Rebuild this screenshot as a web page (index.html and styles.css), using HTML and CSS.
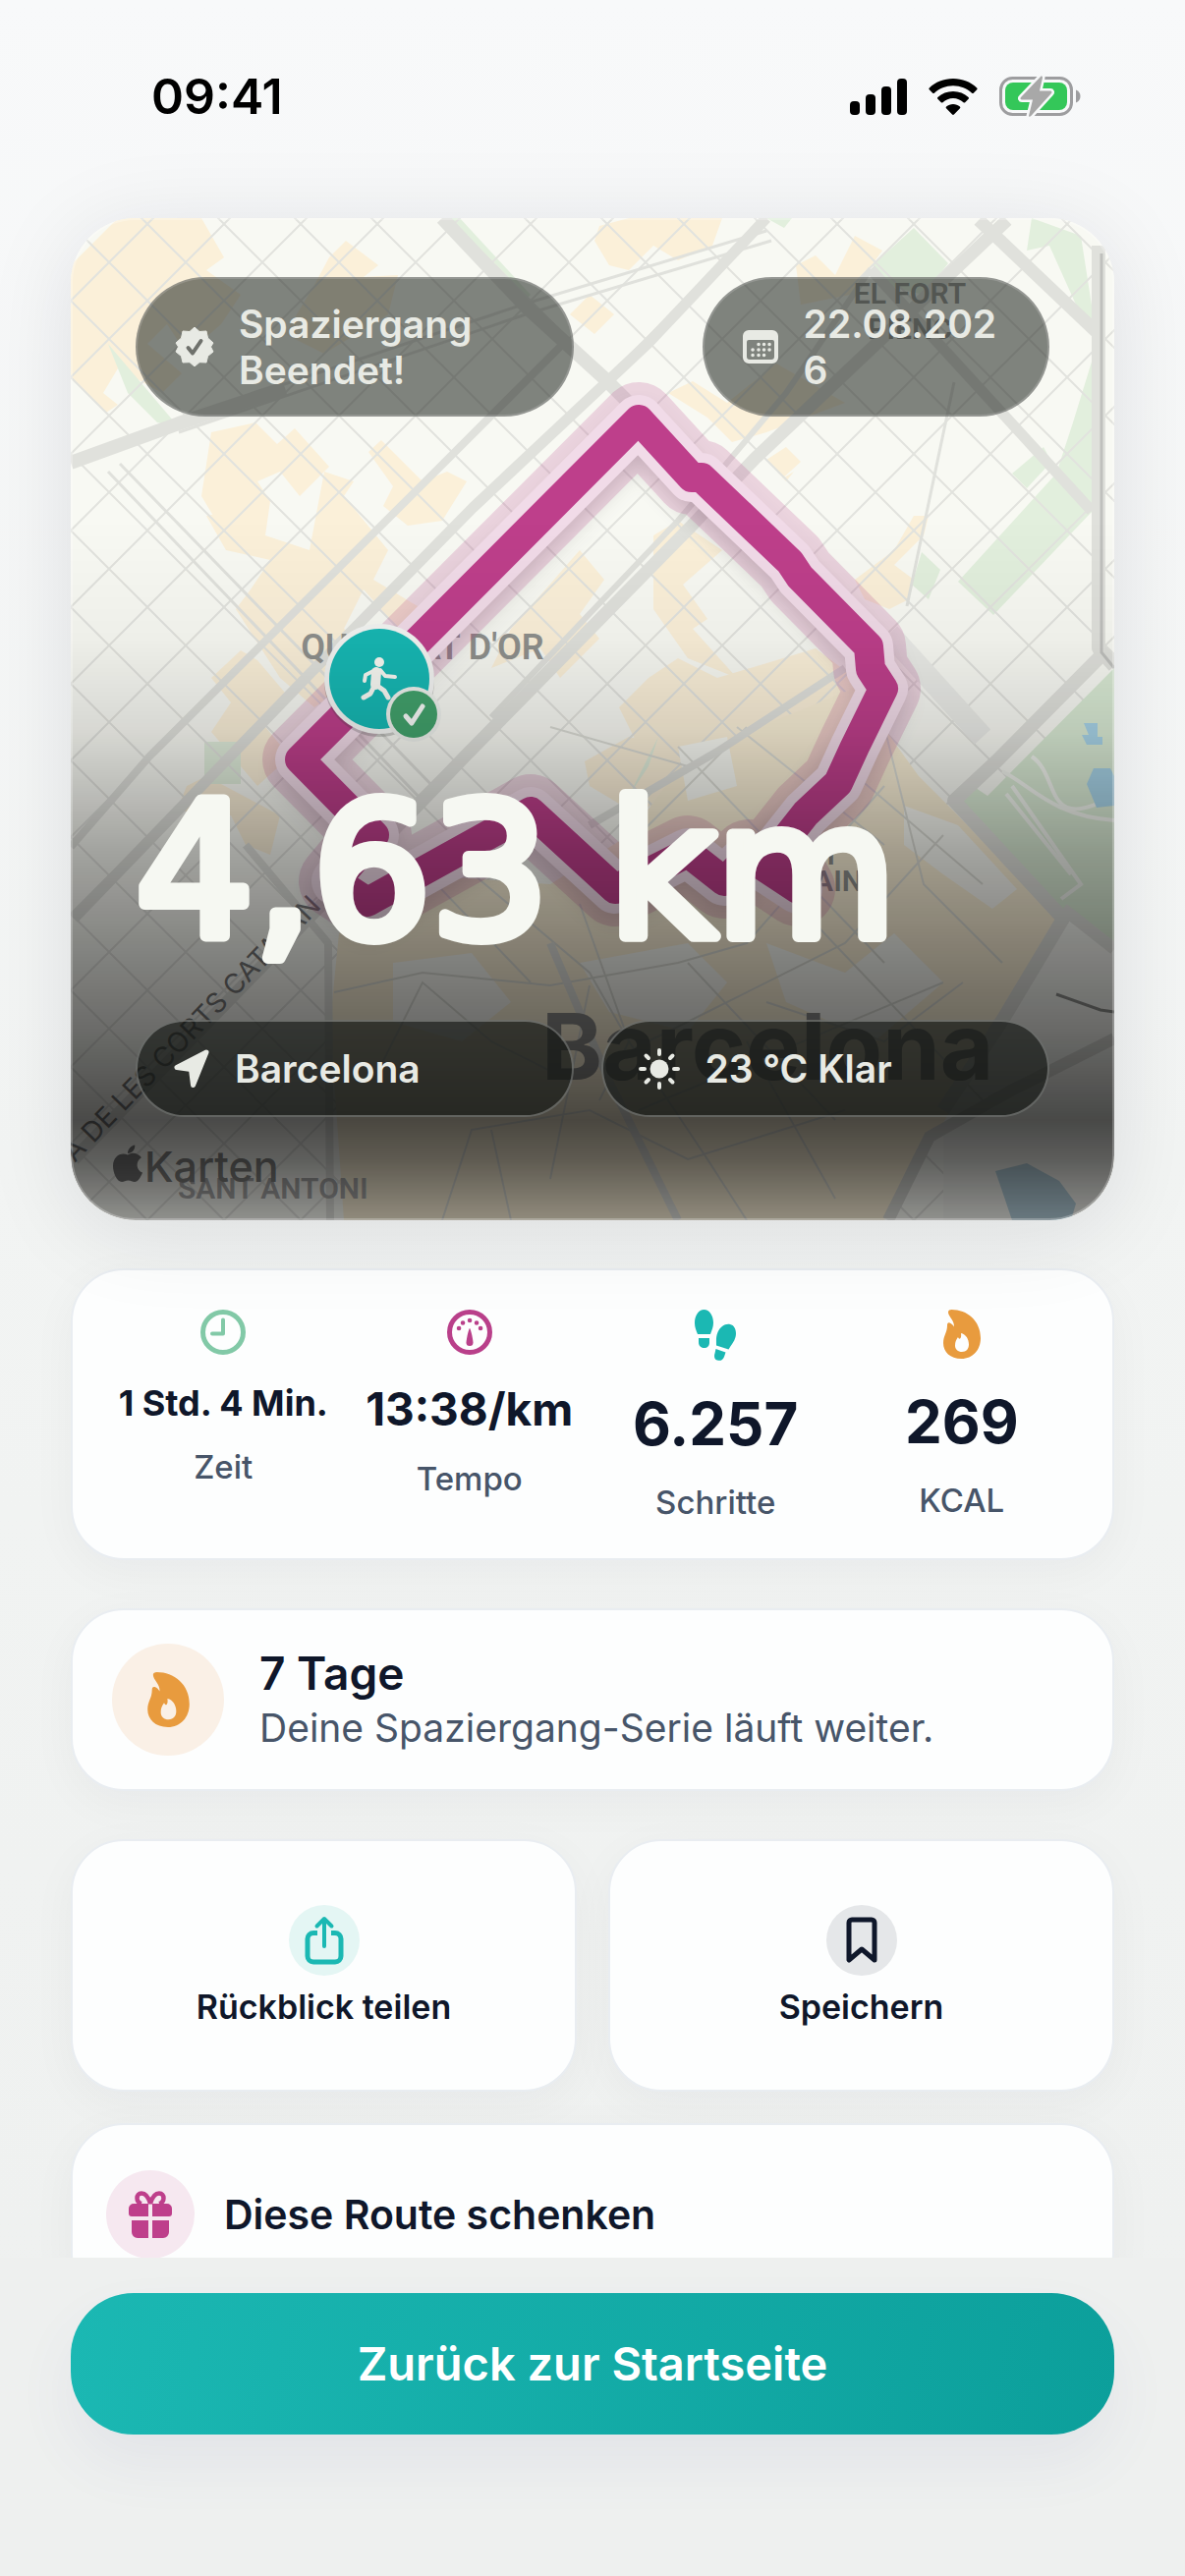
FILE: index.html
```html
<!DOCTYPE html>
<html lang="de">
<head>
    <meta charset="UTF-8">
    <meta name="viewport" content="width=device-width, initial-scale=1.0">
    <title>Spaziergang Beendet</title>
    <link rel="stylesheet" href="styles.css">
</head>
<body>
    <header class="status-bar">
        <span class="clock">09:41</span>
        <div class="status-icons">
            <svg width="58" height="38" viewBox="0 0 58 38">
                <rect x="0" y="24" width="10" height="14" rx="4"/>
                <rect x="16" y="17" width="10" height="21" rx="4"/>
                <rect x="32" y="9" width="10" height="29" rx="4"/>
                <rect x="48" y="1" width="10" height="37" rx="4"/>
            </svg>
            <svg width="50" height="38" viewBox="0 0 50 38">
                <path d="M25 1C15.500 1 7 4.500.8 10.500c-.6.6-.6 1.200 0 1.800l3.400 3.400c.5.500 1.200.5 1.700 0C11 11 17.500 8.200 25 8.200s14 2.800 19.100 7.500c.5.500 1.200.5 1.700 0l3.400-3.400c.6-.6.6-1.200 0-1.800C43 4.500 34.500 1 25 1z"/>
                <path d="M25 14c-6 0-11.500 2.200-15.600 6-.6.6-.6 1.200 0 1.800l3.400 3.400c.5.500 1.200.5 1.700 0C17.300 22.700 21 21 25 21s7.700 1.700 10.500 4.200c.5.500 1.200.5 1.700 0l3.400-3.400c.6-.6.6-1.200 0-1.800C36.500 16.200 31 14 25 14z"/>
                <path d="M25 27c-2.600 0-5 .9-6.900 2.500-.6.5-.6 1.200-.1 1.700l6.100 6.300c.5.500 1.300.5 1.800 0l6.100-6.300c.5-.5.5-1.200-.1-1.700C30 27.900 27.600 27 25 27z"/>
            </svg>
            <svg width="83" height="42" viewBox="0 0 83 42">
                <rect x="1.500" y="2.500" width="72" height="37" rx="12" fill="none" stroke="#9d9d9f" stroke-width="3"/>
                <path d="M78 14.500c2.800 1 4.500 3.500 4.500 6.500s-1.700 5.500-4.500 6.500z" fill="#9d9d9f"/>
                <rect x="6" y="7" width="63" height="28" rx="8" fill="#34c759"/>
                <path d="M42 1L22 22c-1 1-.5 2.500 1 2.500h11L30 41c0 1 1 1 2 .3L53 18c1-1 .5-2.500-1-2.500H41L44 2c.2-1-1-2-2-1z" fill="#a8a8a8" stroke="#f8f9fa" stroke-width="5" paint-order="stroke"/>
            </svg>
        </div>
    </header>

    <main class="content">
        <section class="hero">
            <svg class="map" viewBox="72 222 1062 1020" preserveAspectRatio="xMidYMid slice">
                <defs>
                    <pattern id="blocks" x="72" y="540" width="78" height="78" patternUnits="userSpaceOnUse">
                        <path d="M0 0L78 78M78 0L0 78" stroke="#e2e3de" stroke-width="2" fill="none"/>
                    </pattern>
                    <filter id="soft" x="-20%" y="-20%" width="140%" height="140%">
                        <feGaussianBlur stdDeviation="12"/>
                    </filter>
                </defs>
                <rect x="72" y="222" width="1062" height="1020" fill="#f8f9f3"/>

                <!-- built-up areas -->
                <g fill="#fbf0d9">
                    <path d="M72 270L120 222H205L228 262L210 275L245 300L225 330L190 360L170 330L150 350L185 380L165 400L120 375L105 400L120 412L108 420L72 385z"/>
                    <path d="M320 290L335 262L352 245L385 270L370 282L405 280L395 320L330 360L290 340z"/>
                    <path d="M215 440L260 430L282 452L300 436L335 475L305 505L285 480L262 490L275 510L270 545L220 530L205 505z"/>
                    <path d="M375 460L388 448L430 490L455 480L475 490L450 530L415 535L390 515L400 495z"/>
                    <path d="M210 525L235 520L270 545L315 560L330 480L360 490L350 505L395 560L380 590L430 620L405 640L370 600L350 640L395 665L320 720L285 690L240 620L255 600L275 570L230 560z"/>
                    <path d="M215 690L245 662L262 672L290 705L270 740L295 770L262 800L215 745L235 715z"/>
                    <path d="M520 640L590 560L615 590L590 625L610 650L570 690L550 660L500 680z"/>
                    <path d="M610 230L640 222H735L725 250L690 265L665 250L640 275L620 270L605 245z"/>
                    <path d="M810 270L830 260L850 280L870 240L898 255L865 300L815 310z"/>
                    <path d="M680 400L705 388L740 410L790 370L860 410L780 440L745 450L720 425z"/>
                    <path d="M780 468L800 455L815 470L795 488L808 480L800 490z"/>
                    <path d="M665 545L690 530L735 560L695 595L720 630L705 640L750 690L700 670L665 620z"/>
                    <path d="M870 590L910 560L930 525L945 525L940 545L910 575L930 590L925 610L905 620L880 610z"/>
                    <path d="M660 690L690 670L730 690L830 660L870 690L900 740L880 790L770 800L650 760L630 720z"/>
                    <path d="M595 775L640 750L690 760L695 790L650 830L600 800z"/>
                    <path d="M190 800L210 790L285 830L275 870L250 860L235 830L180 825z"/>
                    <path d="M580 320L600 300L625 320L605 340z"/>
                </g>
                <!-- parks -->
                <g fill="#e2efdd">
                    <path d="M888 270L930 232L965 268L940 300L900 290z"/>
                    <path d="M452 222H468L540 300L530 310z"/>
                    <path d="M1050 222L1100 240L1114 330L1095 310L1068 250L1045 255z"/>
                    <path d="M1112 365L1092 430L1075 482L975 592L1011 626L1112 520z"/>
                    <path d="M1030 482L1062 455L1070 470L1045 497z"/>
                    <path d="M938 562L957 580L945 610L928 595z"/>
                    <path d="M110 350L182 435L160 430L130 400z"/>
                    <path d="M780 222H806L798 232z"/>
                    <path d="M640 810L670 750L660 780z"/>
                    <path d="M208 755H245V798H208z"/>
                </g>

                <rect x="72" y="222" width="1062" height="1020" fill="url(#blocks)"/>
                <path d="M1134 680L1005 810L990 800L975 815L1085 930L1134 966z" fill="#d9ead4"/>
                <path d="M1134 966L1085 935L1021 1037L960 1140V1242H1134z" fill="#f3f4ef"/>

                <!-- old town -->
                <path d="M350 1242L336 1040L345 950L420 890L560 900L640 850L700 770L870 700L935 790L975 830L1080 940L1010 1060L900 1242z" fill="#f9efd6"/>
                <g fill="#f8f9f3">
                    <path d="M400 980L480 970L520 1020L470 1060L400 1040z"/>
                    <path d="M690 760L740 750L750 800L700 815z"/>
                    <path d="M780 960L860 990L910 950L960 1000L890 1060L800 1020z"/>
                    <path d="M590 980L700 960L740 1000L700 1050L620 1030z"/>
                    <path d="M920 820L975 840L1035 905L1010 925L960 890L920 860z"/>
                </g>
                <path d="M430 885L540 1000M470 880L600 990L640 1060L610 1120M340 1010L430 990L560 1003L690 980L760 960L900 800M380 1100L430 1000L500 1060L580 1100L700 1040L860 960L960 850M590 920L640 1060L720 1180L760 1242M700 980L850 1140M600 1003L560 1200M820 930L1000 1120M780 1020L900 1060L980 1000M650 1130L960 1000M450 1242L480 1150L600 1130L700 1180L860 1130M500 1150L520 1242M860 780L1000 900M900 740L940 900L1020 980M760 1060L850 1220M690 760L900 980M750 740L900 860M640 860L760 740M560 740L700 780" stroke="#dbdcd5" stroke-width="2" fill="none"/>
                <path d="M1134 1057L1029 1110L946 1157L904 1242" fill="none" stroke="#d8d9d4" stroke-width="12"/>
                <path d="M1013 1192L1045 1184L1078 1202L1095 1225L1090 1242H1030z" fill="#b4cfdb"/>

                <!-- main roads -->
                <g fill="none" stroke="#e0e1dc" stroke-linejoin="round">
                    <path d="M72 471L182 431L290 395" stroke-width="14"/>
                    <path d="M182 427L535 309L780 235M182 440L535 320L785 245" stroke-width="3"/>
                    <path d="M450 222L535 312L615 385L650 420" stroke-width="14"/>
                    <path d="M72 862L152 770L427 496L577 346" stroke-width="8"/>
                    <path d="M75 935L316 685L481 517L660 349L780 222" stroke-width="11"/>
                    <path d="M75 1180L270 980L430 815L473 770L704 535L768 467L1025 224" stroke-width="13"/>
                    <path d="M500 730L690 530L800 400L886 274" stroke-width="6"/>
                    <path d="M886 274L1111 520" stroke-width="11"/>
                    <path d="M996 224L1116 338" stroke-width="13"/>
                    <path d="M971 389L923 617" stroke-width="3"/>
                    <path d="M1118 250V660L1134 678" stroke-width="14"/>
                    <path d="M1120 668L1014 775L971 815L1082 935L1021 1037L960 1130" stroke-width="14"/>
                    <path d="M1082 925L1134 966" stroke-width="12"/>
                    <path d="M905 645L1000 750" stroke-width="22" stroke="#ebece8"/>
                    <path d="M600 840L730 765L860 680" stroke-width="8"/>
                    <path d="M560 960L620 1100L690 1242M336 1242L334 960L250 860" stroke-width="8"/>
                    <path d="M110 480L430 815M122 472L445 805" stroke-width="3"/>
                </g>
                <path d="M1121 258V664L1134 680" fill="none" stroke="#bfc0bd" stroke-width="3"/>
                <path d="M1075 1012L1120 1028L1134 1030" fill="none" stroke="#8e8f8c" stroke-width="3"/>
                <path d="M1020 785C1050 800 1070 830 1134 835M1050 770C1080 790 1060 850 1134 810M1030 800L1100 900L1080 915M1024 808L1090 890" fill="none" stroke="#f1f4ee" stroke-width="4"/>
                <path d="M1103 736H1117V750H1122V758H1106L1101 748H1108z" fill="#a8d4e8"/>
                <path d="M1113 782H1130L1134 790V820L1116 822L1106 798z" fill="#a8d4e8"/>

                <!-- place names -->
                <g class="place">
                    <text x="926" y="309" text-anchor="middle">EL FORT</text>
                    <text x="926" y="345" text-anchor="middle">PIENC</text>
                    <text x="430" y="671" text-anchor="middle" class="quarter">QUADRAT D'OR</text>
                    <text x="855" y="880" text-anchor="end">SANT</text>
                    <text x="878" y="907" text-anchor="end">AIN</text>
                    <text x="181" y="1220" class="faint">SANT ANTONI</text>
                </g>
                <text class="street" transform="translate(76 1184) rotate(-46)">A DE LES CORTS CATALAN</text>
                <text class="city" x="551" y="1099">Barcelona</text>

                <!-- walked route -->
                <g fill="none" stroke-linejoin="round" stroke-linecap="round">
                    <g stroke="#555" stroke-width="40" opacity=".3" filter="url(#soft)">
                        <path d="M305 782L650 440L709 500L814 595L884 668L899 711L870 770L820 838L762 882L737 906L700 878L626 914L540 836L374 930L341 904L381 858z"/>
                    </g>
                    <path class="route-glow" d="M650 427L305 773L381 850L342 897L374 918L540 826L626 905L700 868L737 897L762 872L812 905L790 866L820 828L853 797L870 760L899 701L886 681L884 658L814 587L804 572L714 486L704 486z"/>
                    <path class="route-casing" d="M650 427L305 773L381 850L342 897L374 918L540 826L626 905L700 868L737 897L762 872L812 905L790 866L820 828L853 797L870 760L899 701L886 681L884 658L814 587L804 572L714 486L704 486z"/>
                    <path class="route-line" d="M650 427L305 773L381 850L342 897L374 918L540 826L626 905L700 868L737 897L762 872L812 905L790 866L820 828L853 797L870 760L899 701L886 681L884 658L814 587L804 572L714 486L704 486z"/>
                </g>

                <!-- end marker -->
                <circle cx="386" cy="694" r="56" fill="#444" opacity=".25"/>
                <circle cx="386" cy="691" r="56" fill="#f4f5f3"/>
                <circle cx="386" cy="691" r="51" fill="#17b8b4"/>
                <g fill="none" stroke="#f8f9f3" stroke-linecap="round" stroke-linejoin="round">
                    <circle cx="386" cy="674" r="5" fill="#f8f9f3" stroke="none"/>
                    <path d="M383 684L382 697" stroke-width="10"/>
                    <path d="M380 683L372 687L371 693M387 682L392 688L402 689" stroke-width="4"/>
                    <path d="M384 698L391 703L395 710M380 700L377 706L370 710" stroke-width="5"/>
                </g>
                <circle cx="421" cy="727" r="28" fill="#eef1ed"/>
                <circle cx="421" cy="727" r="24" fill="#42a26c"/>
                <path d="M413 729L419 736L430 719" fill="none" stroke="#f6faf7" stroke-width="5" stroke-linecap="round" stroke-linejoin="round"/>

                <g transform="translate(115 1166)" fill="#777">
                    <path d="M15 9.500c3-1.800 7-2.300 10-.5 2 .9 3 2 3.800 3.200-6.200 4-5.300 13 1.200 15.300-1.600 4.400-4.600 9.500-8 9.500-2.500 0-3.700-1.500-6.500-1.500S11.300 37 9 37C4 37 0 27.500 0 21 0 11 8 6.500 15 9.500z"/>
                    <path d="M15 8c-.2-4 3.300-8 7.300-8.500C22.700 4 19.200 8 15 8z"/>
                </g>
                <text class="maps-brand" x="147" y="1203">Karten</text>
            </svg>
            <div class="shade"></div>

            <div class="hero-body">
                <div class="pills pills-top">
                    <div class="pill pill-state">
                        <svg width="40" height="40" viewBox="0 0 40 40">
                            <path d="M20 0l5 4.500 7-.5 1.500 7L39 16l-2.500 4L39 25l-5.500 4.500L32 36l-7-.3L20 40l-5-4.300-7 .3-1.500-6.500L1 25l2.500-5L1 16l5.500-5L8 4l7 .5z" fill="currentColor" stroke="currentColor" stroke-linejoin="round"/>
                            <path d="M13.500 21L18 26.500L26.500 14" fill="none" stroke="#6f716c" stroke-width="4" stroke-linecap="round" stroke-linejoin="round"/>
                        </svg>
                        <span>Spaziergang Beendet!</span>
                    </div>
                    <div class="pill pill-date">
                        <svg width="38" height="36" viewBox="0 0 38 36">
                            <path fill-rule="evenodd" d="M7 1h24a6 6 0 016 6v22a6 6 0 01-6 6H7a6 6 0 01-6-6V7a6 6 0 016-6zM7 11a2 2 0 00-2 2v15a3 3 0 003 3h22a3 3 0 003-3V13a2 2 0 00-2-2z" fill="currentColor"/>
                            <path d="M17 15.500h.1M22.500 15.500h.1M28 15.500h.1M11 21h.1M17 21h.1M22.500 21h.1M28 21h.1M11 26.500h.1M17 26.500h.1M22.500 26.500h.1" stroke="currentColor" stroke-width="3.500" stroke-linecap="round"/>
                        </svg>
                        <time datetime="2026-08-22">22.08.2026</time>
                    </div>
                </div>
                <h1 class="distance">
                    <svg width="100%" height="240">
                        <text x="0" y="190">4,63 km</text>
                    </svg>
                </h1>
                <div class="pills">
                    <div class="pill pill-dark pill-place">
                        <svg width="38" height="40" viewBox="0 0 38 40">
                            <path d="M34 3L4 18.500L18.500 20.500L20.500 36.500z" fill="currentColor" stroke="currentColor" stroke-width="5" stroke-linejoin="round"/>
                        </svg>
                        <span>Barcelona</span>
                    </div>
                    <div class="pill pill-dark pill-weather">
                        <svg width="42" height="42" viewBox="0 0 42 42">
                            <circle cx="21" cy="21" r="9.500" fill="currentColor"/>
                            <path d="M21 2v4M21 36v4M2 21h4M36 21h4M7.500 7.500l2.500 2.500M32 32l2.500 2.500M34.500 7.500L32 10M10 32l-2.500 2.500" stroke="currentColor" stroke-width="4" stroke-linecap="round"/>
                        </svg>
                        <span>23 °C Klar</span>
                    </div>
                </div>
            </div>
        </section>

        <section class="card stats">
            <div class="stat">
                <svg width="46" height="46" viewBox="0 0 46 46" fill="none" stroke="#82c9a7">
                    <circle cx="23" cy="23" r="20.500" stroke-width="5"/>
                    <path d="M23 10.500V24.500H12" stroke-width="4" stroke-linecap="round" stroke-linejoin="round"/>
                </svg>
                <strong class="value small">1 Std. 4 Min.</strong>
                <span class="label">Zeit</span>
            </div>
            <div class="stat">
                <svg width="46" height="46" viewBox="0 0 46 46">
                    <circle cx="23" cy="23" r="20.500" fill="none" stroke="#b9408a" stroke-width="5"/>
                    <path d="M12 19h.1M16 13.500h.1M23 11h.1M30 13.500h.1M34 19h.1" stroke="#b9408a" stroke-width="4.500" stroke-linecap="round"/>
                    <path d="M23 19c1 0 3.500 12 3.500 14.500a3.500 3.500 0 01-7 0C19.500 31 22 19 23 19z" fill="#b9408a"/>
                </svg>
                <strong class="value medium">13:38/km</strong>
                <span class="label">Tempo</span>
            </div>
            <div class="stat">
                <svg width="42" height="52" viewBox="0 0 42 52" fill="#1bb8b3">
                    <path d="M9.500 0C15 0 19 6 19 13.500c0 4-1.500 7.500-3 11.500H3C1.500 21 0 18 0 13.500C0 6 4 0 9.500 0z"/>
                    <path d="M4 29h11v4.500c0 3.500-2 5.500-5.500 5.500S4 36.500 4 33z"/>
                    <path d="M36 15c5 1 7 7 5.500 13-1 4.500-4.500 8-7 12.500L22 36.500c0-5-.5-9 1.500-13.500C26 17.500 31 14 36 15z"/>
                    <path d="M21.500 40L31.500 43.500L30 48c-1.500 3.500-4 4.500-7 3.500s-3.500-4-2.500-7z"/>
                </svg>
                <strong class="value">6.257</strong>
                <span class="label">Schritte</span>
            </div>
            <div class="stat">
                <svg class="flame" width="38" height="50" viewBox="0 0 38 50">
                    <path fill-rule="evenodd" d="M5 2.500C5 .8 6.500 0 8.500 0C24 0 38 11 38 29C38 41 30 50 18.500 50C7 50 0 43 0 34C0 26 4 24 4 16C4 14 5 13 6.500 13.500C8.500 14 10 16 11 17.500C11.500 11 5 7 5 2.500zM18 24C19 30 16 31 15 28C13 31 12 33 12 36.500C12 40.500 15 43 19 43C23.500 43 26 40 26 35.500C26 30 23 25 18 24z"/>
                </svg>
                <strong class="value">269</strong>
                <span class="label">KCAL</span>
            </div>
        </section>

        <section class="card streak">
            <div class="badge badge-orange">
                <svg class="flame" width="43" height="56" viewBox="0 0 38 50">
                    <path fill-rule="evenodd" d="M5 2.500C5 .8 6.500 0 8.500 0C24 0 38 11 38 29C38 41 30 50 18.500 50C7 50 0 43 0 34C0 26 4 24 4 16C4 14 5 13 6.500 13.500C8.500 14 10 16 11 17.500C11.500 11 5 7 5 2.500zM18 24C19 30 16 31 15 28C13 31 12 33 12 36.500C12 40.500 15 43 19 43C23.500 43 26 40 26 35.500C26 30 23 25 18 24z"/>
                </svg>
            </div>
            <div class="streak-text">
                <h2>7 Tage</h2>
                <p>Deine Spaziergang-Serie läuft weiter.</p>
            </div>
        </section>

        <section class="actions">
            <div class="action-row">
                <button type="button" class="card action">
                    <span class="badge badge-teal">
                        <svg width="40" height="50" viewBox="0 0 40 50" fill="none" stroke="currentColor" stroke-width="5" stroke-linecap="round" stroke-linejoin="round">
                            <path d="M13 17.500H9a6 6 0 00-6 6V41a6 6 0 006 6h22a6 6 0 006-6V23.500a6 6 0 00-6-6h-4" stroke-linecap="butt"/>
                            <path d="M20 31V3M12.500 10.500L20 3L27.500 10.500" stroke-width="4"/>
                        </svg>
                    </span>
                    Rückblick teilen
                </button>
                <button type="button" class="card action">
                    <span class="badge badge-grey">
                        <svg width="32" height="48" viewBox="0 0 32 48" fill="none" stroke="currentColor" stroke-width="5" stroke-linejoin="round">
                            <path d="M3 6a3 3 0 013-3h20a3 3 0 013 3v38L16 33L3 44z"/>
                        </svg>
                    </span>
                    Speichern
                </button>
            </div>
            <button type="button" class="card gift">
                <span class="badge badge-pink">
                    <svg width="44" height="48" viewBox="0 0 44 48" fill="currentColor">
                        <path d="M5 13h15v13H3a3 3 0 01-3-3v-5a5 5 0 015-5zM24 13h15a5 5 0 015 5v5a3 3 0 01-3 3H24zM3 30h17v18H9a6 6 0 01-6-6zM24 30h17v12a6 6 0 01-6 6H24z"/>
                        <path d="M22 13C20 6 17 2.500 13 2.500c-6 0-6 9 0 10.500M22 13c2-7 5-10.500 9-10.500 6 0 6 9 0 10.500" fill="none" stroke="currentColor" stroke-width="4.500"/>
                    </svg>
                </span>
                Diese Route schenken
            </button>
        </section>
    </main>

    <footer class="bottom-bar">
        <button type="button" class="home-button">Zurück zur Startseite</button>
    </footer>
</body>
</html>
```
FILE: styles.css
```css
* {
    box-sizing: border-box;
}

body {
    margin: 0;
    height: 100vh;
    display: flex;
    flex-direction: column;
    overflow: hidden;
    font-family: Inter, 'Liberation Sans', sans-serif;
    color: #0f172a;
    background: linear-gradient(#f8f9fa, #f2f4f3 45%, #eef0ef);
}

h1, h2, p {
    margin: 0;
}

svg {
    flex: none;
}

button {
    font: inherit;
    color: inherit;
    cursor: pointer;
}

/* status bar */
.status-bar {
    display: flex;
    justify-content: space-between;
    align-items: flex-end;
    padding: 68px 106px 0 154px;
    color: #000;
}

.clock {
    font-size: 50px;
    line-height: 60px;
    font-weight: 600;
}

.status-icons {
    display: flex;
    align-items: center;
    gap: 22px;
    height: 60px;
}

/* scrolling part */
.content {
    flex: 1;
    min-height: 0;
    overflow-y: auto;
    scrollbar-width: none;
    display: flex;
    flex-direction: column;
    gap: 49px;
    padding: 94px 72px 48px;
}

.content > * {
    flex: none;
}

.hero {
    position: relative;
    display: flex;
    min-height: 1020px;
    border-radius: 66px;
    overflow: hidden;
    box-shadow: 0 12px 90px rgba(15, 23, 42, 0.1);
}

.map,
.shade {
    position: absolute;
    inset: 0;
    width: 100%;
    height: 100%;
}

.shade {
    border-radius: 66px;
    border: 2px solid rgba(255, 255, 255, 0.25);
    background: linear-gradient(rgba(0, 0, 0, 0) 30%, rgba(0, 0, 0, 0.04) 42%, rgba(0, 0, 0, 0.13) 51%, rgba(0, 0, 0, 0.34) 63%, rgba(0, 0, 0, 0.46) 72%, rgba(0, 0, 0, 0.57) 81%, rgba(0, 0, 0, 0.7) 90%, rgba(0, 0, 0, 0.62) 94%, rgba(0, 0, 0, 0.42)) border-box;
}

.route-glow {
    stroke: #b9408a;
    stroke-width: 76px;
    opacity: 0.2;
}

.route-casing {
    stroke: #f1dbe8;
    stroke-width: 50px;
}

.route-line {
    stroke: #be3f8b;
    stroke-width: 30px;
}

.place {
    font: 600 30px 'Roboto', sans-serif;
    fill: #8f908d;
}

.quarter {
    font-size: 36px;
}

.faint {
    fill: #aaa;
}

.street {
    font: 400 28px Inter, sans-serif;
    fill: #777;
}

.city {
    font: 700 94px Inter, sans-serif;
    fill: #8a8a88;
}

.maps-brand {
    font: 500 43px Inter, sans-serif;
    fill: #858583;
}

.hero-body {
    position: relative;
    flex: 1;
    display: flex;
    flex-direction: column;
    padding: 60px 66px 105px;
}

.pills {
    display: flex;
    gap: 28px;
}

.pills-top {
    justify-content: space-between;
    margin-bottom: auto;
}

.pill {
    display: flex;
    align-items: center;
    gap: 25px;
    padding: 22px 38px;
    border: 2px solid rgba(255, 255, 255, 0.16);
    border-radius: 71px;
    background: rgba(40, 44, 40, 0.58);
    color: #e8eae4;
    font-size: 39px;
    line-height: 47px;
    font-weight: 600;
}

.pill-state {
    flex: 0 0 48%;
}

.pill-date {
    flex: 0 0 38%;
    word-break: break-all;
}

.pill-dark {
    padding: 24px 36px;
    border-color: rgba(255, 255, 255, 0.28);
    background: rgba(18, 22, 18, 0.64);
}

.pill-place {
    flex: 0 0 48%;
}

.pill-weather {
    flex: 1;
}

.distance {
    margin-bottom: 35px;
    line-height: 0;
}

/* rounded look: round joins on a thick outline */
.distance text {
    font: 400 189px 'DejaVu Sans', sans-serif;
    fill: #f6f8f2;
    stroke: #f6f8f2;
    stroke-width: 12px;
    stroke-linejoin: round;
}

/* cards */
.card {
    border: 2px solid #e9edf1;
    border-radius: 54px;
    background: #fdfefe;
    box-shadow: 0 12px 48px rgba(15, 23, 42, 0.04);
}

.stats {
    display: grid;
    grid-template-columns: repeat(4, 1fr);
    min-height: 297px;
    padding: 40px 28px 36px;
}

.stat {
    display: flex;
    flex-direction: column;
    align-items: center;
}

.value {
    margin: 28px 0 24px;
    font-size: 60px;
    line-height: 72px;
    font-weight: 700;
    white-space: nowrap;
}

.value.medium {
    font-size: 46px;
    line-height: 54px;
}

.value.small {
    font-size: 36px;
    line-height: 42px;
}

.label {
    font-size: 33px;
    line-height: 40px;
    font-weight: 500;
    color: #475569;
}

.flame {
    fill: #e89b3e;
}

.badge {
    display: flex;
    align-items: center;
    justify-content: center;
    flex: none;
    border-radius: 50%;
}

.badge-orange {
    width: 114px;
    height: 114px;
    background: #faf0e6;
}

.badge-teal,
.badge-grey {
    width: 72px;
    height: 72px;
}

.badge-teal {
    background: #e4f6f4;
    color: #1bb8b3;
}

.badge-grey {
    background: #e5e7e9;
}

.badge-pink {
    width: 90px;
    height: 90px;
    background: #f6e8f0;
    color: #be3f8b;
}

.streak {
    display: flex;
    align-items: center;
    gap: 36px;
    padding: 34px 40px;
}

.streak h2 {
    font-size: 46px;
    line-height: 58px;
    font-weight: 600;
}

.streak p {
    font-size: 39px;
    line-height: 54px;
    color: #475569;
}

.actions {
    display: flex;
    flex-direction: column;
    gap: 32px;
}

.action-row {
    display: grid;
    grid-template-columns: 1fr 1fr;
    gap: 32px;
}

.action {
    display: flex;
    flex-direction: column;
    align-items: center;
    gap: 12px;
    padding: 65px 24px 64px;
    font-size: 34px;
    line-height: 40px;
    font-weight: 600;
}

.gift {
    display: flex;
    align-items: center;
    gap: 30px;
    padding: 46px 34px;
    font-size: 41px;
    line-height: 50px;
    font-weight: 600;
    text-align: left;
}

/* fixed bottom action */
.bottom-bar {
    padding: 36px 72px 144px;
    background: #eef0ef;
}

.home-button {
    display: block;
    width: 100%;
    padding: 42px;
    border: none;
    border-radius: 64px;
    background: linear-gradient(100deg, #1bb8b3, #0c9f9b);
    box-shadow: 0 30px 60px rgba(80, 90, 150, 0.07);
    color: #fff;
    font-size: 47px;
    line-height: 60px;
    font-weight: 600;
}
```
